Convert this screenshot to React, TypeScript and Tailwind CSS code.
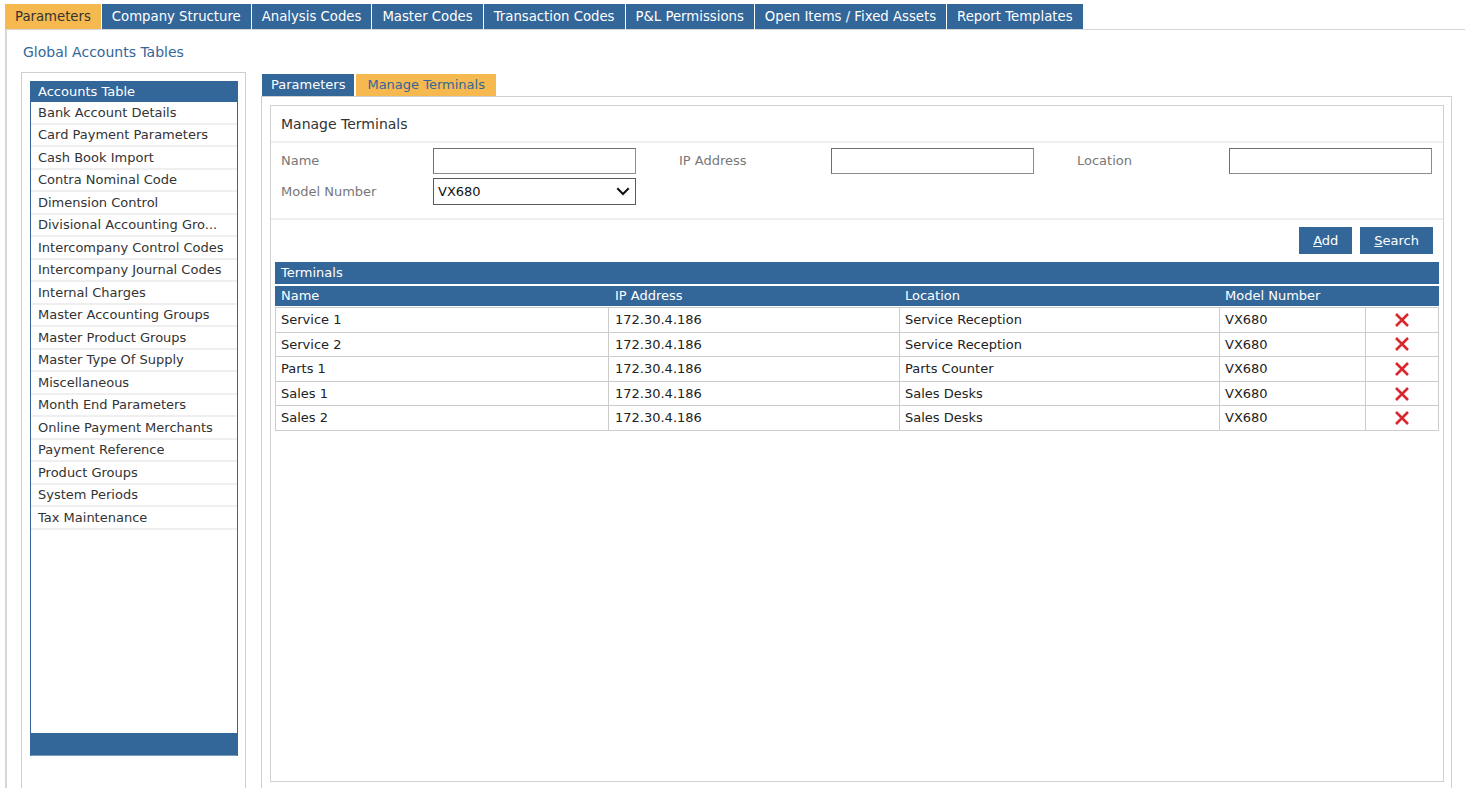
import React from "react";

const topTabs = [
  "Parameters",
  "Company Structure",
  "Analysis Codes",
  "Master Codes",
  "Transaction Codes",
  "P&L Permissions",
  "Open Items / Fixed Assets",
  "Report Templates",
];

const listItems = [
  "Bank Account Details",
  "Card Payment Parameters",
  "Cash Book Import",
  "Contra Nominal Code",
  "Dimension Control",
  "Divisional Accounting Gro...",
  "Intercompany Control Codes",
  "Intercompany Journal Codes",
  "Internal Charges",
  "Master Accounting Groups",
  "Master Product Groups",
  "Master Type Of Supply",
  "Miscellaneous",
  "Month End Parameters",
  "Online Payment Merchants",
  "Payment Reference",
  "Product Groups",
  "System Periods",
  "Tax Maintenance",
];

const rows = [
  ["Service 1", "172.30.4.186", "Service Reception", "VX680"],
  ["Service 2", "172.30.4.186", "Service Reception", "VX680"],
  ["Parts 1", "172.30.4.186", "Parts Counter", "VX680"],
  ["Sales 1", "172.30.4.186", "Sales Desks", "VX680"],
  ["Sales 2", "172.30.4.186", "Sales Desks", "VX680"],
];

function RedX() {
  return (
    <svg width="16" height="16" viewBox="0 0 16 16">
      <path d="M2 2 L14 14 M14 2 L2 14" stroke="#d8272d" strokeWidth="2.6" strokeLinecap="butt" />
    </svg>
  );
}

function Chevron() {
  return (
    <svg width="14" height="9" viewBox="0 0 14 9">
      <path d="M1.3 1.3 L7 7 L12.7 1.3" stroke="#111" strokeWidth="2" fill="none" />
    </svg>
  );
}

function TextInput() {
  return <div className="w-[203px] h-[26px] border border-[#8c8c8c] border-t-[#6f6f6f] border-l-[#6f6f6f] bg-white" />;
}

export default function App() {
  return (
    <div className="w-[1465px] h-[788px] overflow-hidden bg-white text-[13px] text-[#333] font-['DejaVu_Sans',sans-serif]">
      {/* top tabs */}
      <div className="flex pl-[5px] pt-[4px] gap-[1px] text-[13.25px]">
        {topTabs.map((t, i) => (
          <div
            key={t}
            className={
              i === 0
                ? "h-[25px] px-[10px] pt-[1px] flex items-center bg-[#f6b94f] text-[#333] whitespace-nowrap"
                : "h-[25px] px-[10px] pt-[1px] flex items-center bg-[#336699] text-white whitespace-nowrap"
            }
          >
            {t}
          </div>
        ))}
      </div>

      {/* main container */}
      <div className="ml-[5px] h-[770px] border-l-2 border-t border-[#d6d6d6]">
        <div className="pl-[16px] pt-[13px] text-[14px] leading-[18px] text-[#336699]">Global Accounts Tables</div>

        <div className="flex mt-[11px] pl-[14px]">
          {/* left panel */}
          <div className="w-[225px] h-[720px] shrink-0 border border-[#d0d0d0] pt-[8px] pl-[8px]">
            <div className="w-[208px] h-[675px] flex flex-col border-x border-[#336699]">
              <div className="h-[21px] shrink-0 bg-[#336699] text-white pl-[7px] flex items-center">Accounts Table</div>
              {listItems.map((it) => (
                <div
                  key={it}
                  className="h-[22.5px] shrink-0 border-b-2 border-[#efefef] pl-[7px] flex items-center whitespace-nowrap text-[#333]"
                >
                  {it}
                </div>
              ))}
              <div className="flex-1" />
              <div className="h-[23px] shrink-0 bg-[#336699] border-b border-[#7e9dbd]" />
            </div>
          </div>

          {/* right column */}
          <div className="ml-[15px] mt-[2px]">
            <div className="flex gap-[2px] ml-[1px]">
              <div className="h-[22px] px-[9px] flex items-center bg-[#336699] text-white">Parameters</div>
              <div className="h-[22px] px-[11px] flex items-center bg-[#f6b94f] text-[#336699]">Manage Terminals</div>
            </div>
            <div className="w-[1191px] h-[720px] border border-[#d0d0d0] p-[8px]">
              <div className="w-[1174px] h-[677px] border border-[#d0d0d0] flex flex-col">
                <div className="h-[37px] shrink-0 pl-[10px] pt-[1px] flex items-center text-[14px] text-[#333] border-b-2 border-[#efefef]">
                  Manage Terminals
                </div>

                {/* form */}
                <div className="pl-[10px] pt-[5px] pb-[13px] border-b-2 border-[#efefef] flex flex-col gap-[4px] text-[#777]">
                  <div className="flex items-center h-[26px]">
                    <div className="w-[152px]">Name</div>
                    <TextInput />
                    <div className="w-[43px]" />
                    <div className="w-[152px]">IP Address</div>
                    <TextInput />
                    <div className="w-[43px]" />
                    <div className="w-[152px]">Location</div>
                    <TextInput />
                  </div>
                  <div className="flex items-center h-[27px]">
                    <div className="w-[152px]">Model Number</div>
                    <div className="w-[203px] h-[27px] border border-[#5a5a5a] flex items-center justify-between pl-[4px] pr-[5px] text-[#111]">
                      <span>VX680</span>
                      <Chevron />
                    </div>
                  </div>
                </div>

                {/* buttons */}
                <div className="flex justify-end gap-[8px] pr-[10px] pt-[7px]">
                  <div className="h-[27px] px-[14px] flex items-center bg-[#336699] text-white">
                    <span><span className="underline">A</span>dd</span>
                  </div>
                  <div className="h-[27px] px-[14px] flex items-center bg-[#336699] text-white">
                    <span><span className="underline">S</span>earch</span>
                  </div>
                </div>

                {/* table */}
                <div className="mx-[4px] mt-[8px]">
                  <div className="h-[22px] bg-[#336699] text-white pl-[6px] flex items-center">Terminals</div>
                  <div className="mt-[2px] h-[20px] bg-[#336699] text-white grid grid-cols-[333px_291px_320px_146px_73px] items-center">
                    <div className="pl-[6px]">Name</div>
                    <div className="pl-[7px]">IP Address</div>
                    <div className="pl-[6px]">Location</div>
                    <div className="pl-[6px]">Model Number</div>
                    <div />
                  </div>
                  <div className="mt-[1px] border-t border-l border-[#cccccc]">
                    {rows.map((r, i) => (
                      <div
                        key={i}
                        className="h-[24.6px] border-b border-[#cccccc] grid grid-cols-[333px_291px_320px_146px_73px] text-[#222]"
                      >
                        <div className="border-r border-[#cccccc] pl-[5px] flex items-center">{r[0]}</div>
                        <div className="border-r border-[#cccccc] pl-[6px] flex items-center">{r[1]}</div>
                        <div className="border-r border-[#cccccc] pl-[5px] flex items-center">{r[2]}</div>
                        <div className="border-r border-[#cccccc] pl-[5px] flex items-center">{r[3]}</div>
                        <div className="border-r border-[#cccccc] flex items-center justify-center">
                          <RedX />
                        </div>
                      </div>
                    ))}
                  </div>
                </div>
              </div>
            </div>
          </div>
        </div>
      </div>
    </div>
  );
}
